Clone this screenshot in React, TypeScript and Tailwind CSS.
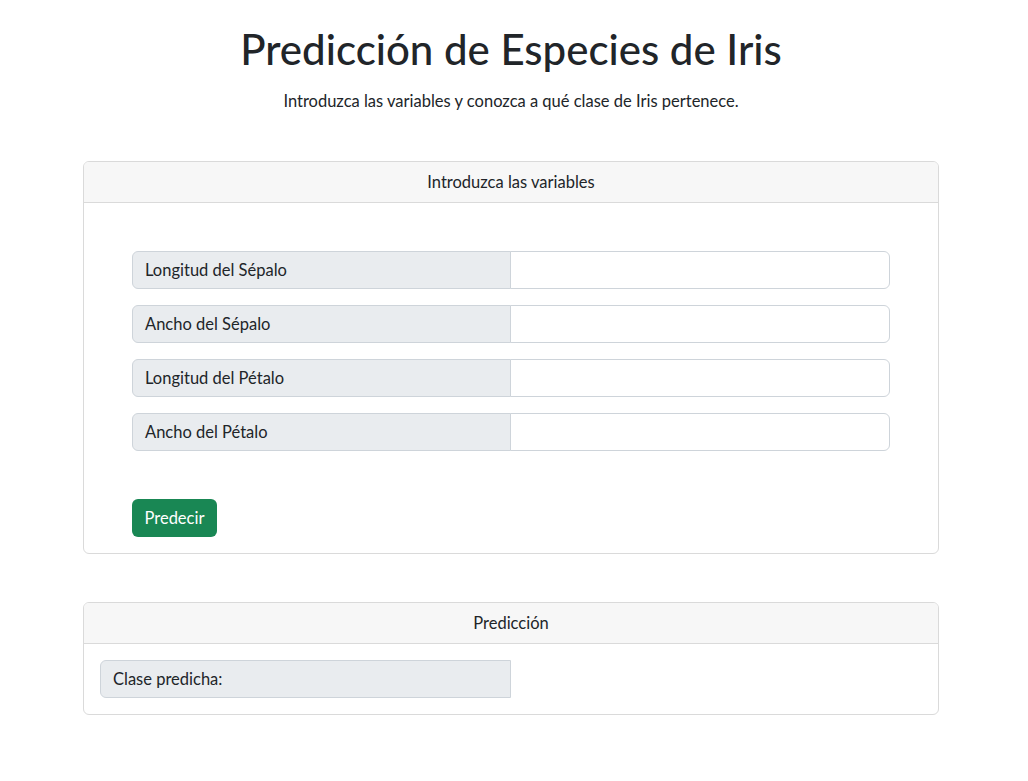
const fields = [
  "Longitud del Sépalo",
  "Ancho del Sépalo",
  "Longitud del Pétalo",
  "Ancho del Pétalo",
];

function Field({ label }: { label: string }) {
  return (
    <div className="flex h-[38px]">
      <span className="flex w-[379px] items-center rounded-l-[6px] border border-[#ced4da] bg-[#e9ecef] px-3">
        {label}
      </span>
      <input
        type="text"
        className="-ml-px flex-1 rounded-r-[6px] border border-[#ced4da] bg-white px-3 outline-none"
      />
    </div>
  );
}

export default function App() {
  return (
    <div className="min-h-screen bg-white text-[16.5px] text-[#212529] [font-family:Lato,'Noto_Sans',sans-serif]">
      <div className="ml-[83px] w-[856px] pt-[25px] pb-10">
        <h1 className="text-center text-[42px] font-medium leading-[48px]">Predicción de Especies de Iris</h1>
        <p className="mt-4 text-center leading-6">
          Introduzca las variables y conozca a qué clase de Iris pertenece.
        </p>

        <div className="mt-12 overflow-hidden rounded-[6px] border border-[#dadada]">
          <div className="flex h-[41px] items-center justify-center border-b border-[#dadada] bg-[#f7f7f7]">
            Introduzca las variables
          </div>
          <div className="px-[48px] pt-[48px] pb-4">
            <div className="flex flex-col gap-4">
              {fields.map((f) => (
                <Field key={f} label={f} />
              ))}
            </div>
            <button className="mt-12 h-[38px] rounded-[6px] bg-[#198754] px-[12.5px] text-white">Predecir</button>
          </div>
        </div>

        <div className="mt-12 overflow-hidden rounded-[6px] border border-[#dadada]">
          <div className="flex h-[41px] items-center justify-center border-b border-[#dadada] bg-[#f7f7f7]">
            Predicción
          </div>
          <div className="px-4 pt-4 pb-4">
            <div className="flex h-[38px] w-[411px] items-center rounded-l-[6px] border border-[#ced4da] bg-[#e9ecef] px-3">
              Clase predicha:
            </div>
          </div>
        </div>
      </div>
    </div>
  );
}
